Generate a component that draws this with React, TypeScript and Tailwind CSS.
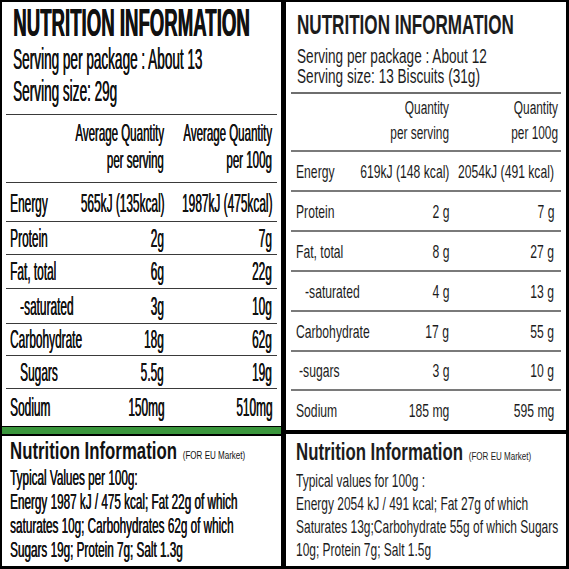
import React from "react";

// condensed look: Liberation Sans squeezed on x only, line box untouched
const Sq = ({ children, className }: { children: React.ReactNode; className: string }) => (
  <span className={`block w-max shrink-0 whitespace-nowrap ${className}`}>{children}</span>
);

type Row = { label: string; a: string; b: string; h: string; pad: string };

const leftRows: Row[] = [
  { label: "Energy", a: "565kJ (135kcal)", b: "1987kJ (475kcal)", h: "h-[39px] pt-[3px]", pad: "pl-[4px]" },
  { label: "Protein", a: "2g", b: "7g", h: "h-[33px]", pad: "pl-[4px]" },
  { label: "Fat, total", a: "6g", b: "22g", h: "h-[34px]", pad: "pl-[4px]" },
  { label: "-saturated", a: "3g", b: "10g", h: "h-[35px]", pad: "pl-[14px]" },
  { label: "Carbohydrate", a: "18g", b: "62g", h: "h-[32px]", pad: "pl-[4px]" },
  { label: "Sugars", a: "5.5g", b: "19g", h: "h-[33px]", pad: "pl-[14px]" },
  { label: "Sodium", a: "150mg", b: "510mg", h: "h-[38px]", pad: "pl-[4px]" },
];

const rightRows: Row[] = [
  { label: "Energy", a: "619kJ (148 kcal)", b: "2054kJ (491 kcal)", h: "h-[40px]", pad: "pl-[5px]" },
  { label: "Protein", a: "2 g", b: "7 g", h: "h-[40px]", pad: "pl-[5px]" },
  { label: "Fat, total", a: "8 g", b: "27 g", h: "h-[40px]", pad: "pl-[5px]" },
  { label: "-saturated", a: "4 g", b: "13 g", h: "h-[40px]", pad: "pl-[14px]" },
  { label: "Carbohydrate", a: "17 g", b: "55 g", h: "h-[40px]", pad: "pl-[5px]" },
  { label: "-sugars", a: "3 g", b: "10 g", h: "h-[39px]", pad: "pl-[8px]" },
  { label: "Sodium", a: "185 mg", b: "595 mg", h: "h-[41px]", pad: "pl-[5px]" },
];

const LeftPanel = () => (
  <section className="flex w-[279px] shrink-0 flex-col overflow-hidden bg-white text-[#111] [text-shadow:0.6px_0_0_#111]">
    <div className="pl-[11px] pt-[1px]">
      <Sq className="origin-left scale-x-[0.49] text-[38px] font-bold leading-[40px] [text-shadow:1.2px_0_0_#111]">NUTRITION INFORMATION</Sq>
    </div>
    <div className="pl-[11px]">
      <Sq className="origin-left scale-x-[0.468] text-[29px] leading-[32px]">Serving per package : About 13</Sq>
      <Sq className="origin-left scale-x-[0.468] text-[29px] leading-[32px]">Serving size: 29g</Sq>
    </div>

    <div className="mx-[4px] mt-[7px]">
      <div className="flex h-[68px] border-t border-[#3a3a3a] pt-[4px]">
        <div className="min-w-0 flex-1" />
        <div className="flex w-[108px] shrink-0 flex-col items-end">
          <Sq className="origin-right scale-x-[0.48] text-[24px] leading-[27px]">Average Quantity</Sq>
          <Sq className="origin-right scale-x-[0.48] text-[24px] leading-[27px]">per serving</Sq>
        </div>
        <div className="flex w-[108px] shrink-0 flex-col items-end">
          <Sq className="origin-right scale-x-[0.48] text-[24px] leading-[27px]">Average Quantity</Sq>
          <Sq className="origin-right scale-x-[0.48] text-[24px] leading-[27px]">per 100g</Sq>
        </div>
        <div className="w-[5px] shrink-0" />
      </div>
      {leftRows.map((r) => (
        <div key={r.label} className={`flex items-center border-t border-[#3a3a3a] ${r.h}`}>
          <div className={`min-w-0 flex-1 ${r.pad}`}>
            <Sq className="origin-left scale-x-[0.475] text-[25px] leading-none">{r.label}</Sq>
          </div>
          <div className="flex w-[108px] shrink-0 justify-end">
            <Sq className="origin-right scale-x-[0.475] text-[25px] leading-none">{r.a}</Sq>
          </div>
          <div className="flex w-[108px] shrink-0 justify-end">
            <Sq className="origin-right scale-x-[0.475] text-[25px] leading-none">{r.b}</Sq>
          </div>
          <div className="w-[5px] shrink-0" />
        </div>
      ))}
    </div>

    <div className="h-[10px] shrink-0 border-t border-b-2 border-black bg-[#3a963c]" />

    <div className="flex-1 pl-[8px] pt-[5px]">
      <Sq className="origin-left scale-x-[0.73] text-[23px] font-bold leading-[21px] [text-shadow:none]">
        Nutrition Information
        <span className="ml-[8px] text-[11px] font-normal">(FOR EU Market)</span>
      </Sq>
      {[
        "Typical Values per 100g:",
        "Energy 1987 kJ / 475 kcal; Fat 22g of which",
        "saturates 10g; Carbohydrates 62g of which",
        "Sugars 19g; Protein 7g; Salt 1.3g",
      ].map((t) => (
        <Sq key={t} className="origin-left scale-x-[0.545] text-[21.5px] leading-[24px]">{t}</Sq>
      ))}
    </div>
  </section>
);

const RightPanel = () => (
  <section className="flex w-[280px] shrink-0 flex-col overflow-hidden bg-white text-[#1c1c1c]">
    <div className="pl-[11px] pt-[6px]">
      <Sq className="origin-left scale-x-[0.61] text-[28px] font-bold leading-[34px]">NUTRITION INFORMATION</Sq>
    </div>
    <div className="pl-[11px] pt-[4px]">
      <Sq className="origin-left scale-x-[0.68] text-[20px] leading-[20px]">Serving per package : About 12</Sq>
      <Sq className="origin-left scale-x-[0.68] text-[20px] leading-[20px]">Serving size: 13 Biscuits (31g)</Sq>
    </div>

    <div className="mx-[5px] mt-[6px]">
      <div className="flex h-[58px] border-t-2 border-[#6e6e6e] pt-[2px]">
        <div className="min-w-0 flex-1" />
        <div className="flex w-[110px] shrink-0 flex-col items-end">
          <Sq className="origin-right scale-x-[0.66] text-[18px] leading-[25px]">Quantity</Sq>
          <Sq className="origin-right scale-x-[0.66] text-[18px] leading-[25px]">per serving</Sq>
        </div>
        <div className="flex w-[109px] shrink-0 flex-col items-end">
          <Sq className="origin-right scale-x-[0.66] text-[18px] leading-[25px]">Quantity</Sq>
          <Sq className="origin-right scale-x-[0.66] text-[18px] leading-[25px]">per 100g</Sq>
        </div>
        <div className="w-[3px] shrink-0" />
      </div>
      {rightRows.map((r) => (
        <div key={r.label} className={`flex items-center border-t-2 border-[#7a7a7a] ${r.h}`}>
          <div className={`min-w-0 flex-1 ${r.pad}`}>
            <Sq className="origin-left scale-x-[0.64] text-[19px] leading-none">{r.label}</Sq>
          </div>
          <div className="flex w-[110px] shrink-0 justify-end">
            <Sq className="origin-right scale-x-[0.64] text-[19px] leading-none">{r.a}</Sq>
          </div>
          <div className="flex w-[105px] shrink-0 justify-end">
            <Sq className="origin-right scale-x-[0.64] text-[19px] leading-none">{r.b}</Sq>
          </div>
          <div className="w-[7px] shrink-0" />
        </div>
      ))}
    </div>

    <div className="h-[4px] shrink-0 bg-black" />

    <div className="flex-1 pl-[10px] pt-[6px]">
      <Sq className="origin-left scale-x-[0.73] text-[23px] font-bold leading-[25px]">
        Nutrition Information
        <span className="ml-[8px] text-[11px] font-normal">(FOR EU Market)</span>
      </Sq>
      {[
        "Typical values for 100g :",
        "Energy 2054 kJ / 491 kcal; Fat 27g of which",
        "Saturates 13g;Carbohydrate 55g of which Sugars",
        "10g; Protein 7g; Salt 1.5g",
      ].map((t) => (
        <Sq key={t} className="origin-left scale-x-[0.63] text-[19px] leading-[23px]">{t}</Sq>
      ))}
    </div>
  </section>
);

export default function App() {
  return (
    <div className="flex h-[569px] w-[569px] overflow-hidden bg-black pb-[3px] pl-[2px] pr-[3px] pt-[2px] font-['Liberation_Sans',Arial,sans-serif]">
      <LeftPanel />
      <div className="w-[5px] shrink-0" />
      <RightPanel />
    </div>
  );
}
